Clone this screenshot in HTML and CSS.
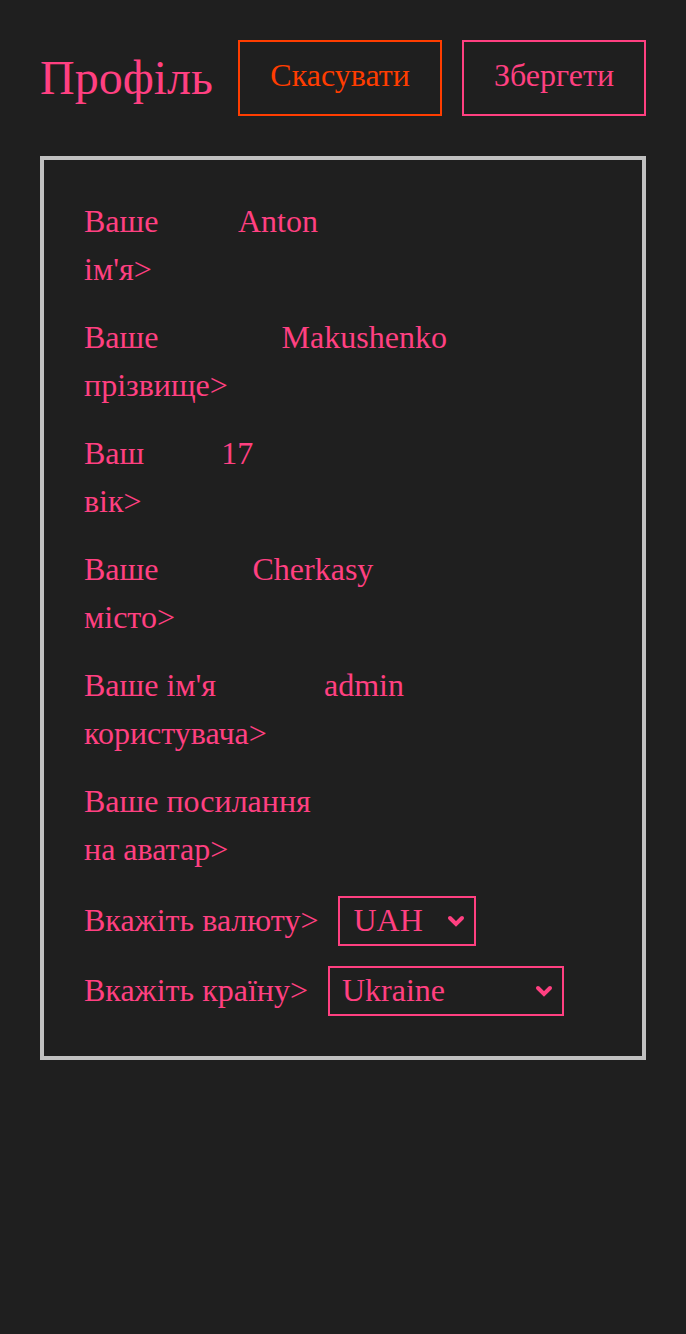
FILE: index.html
```html
<!DOCTYPE html>
<html lang="uk">
<head>
<meta charset="utf-8">
<title>Профіль</title>
<link rel="stylesheet" href="styles.css">
</head>
<body>
<header class="header">
  <h1 class="title">Профіль</h1>
  <div class="actions">
    <button class="btn btn-cancel">Скасувати</button>
    <button class="btn btn-save">Збергети</button>
  </div>
</header>
<form class="card">
  <div class="fields">
    <div class="row">
      <label class="label" for="name">Ваше ім'я&gt;</label>
      <input class="field" id="name" type="text" value="Anton">
    </div>
    <div class="row">
      <label class="label" for="surname">Ваше прізвище&gt;</label>
      <input class="field" id="surname" type="text" value="Makushenko">
    </div>
    <div class="row">
      <label class="label" for="age">Ваш вік&gt;</label>
      <input class="field" id="age" type="text" value="17">
    </div>
    <div class="row">
      <label class="label" for="city">Ваше місто&gt;</label>
      <input class="field" id="city" type="text" value="Cherkasy">
    </div>
    <div class="row">
      <label class="label" for="login">Ваше ім'я користувача&gt;</label>
      <input class="field" id="login" type="text" value="admin">
    </div>
    <div class="row">
      <label class="label" for="avatar">Ваше посилання на аватар&gt;</label>
      <input class="field" id="avatar" type="text" value="">
    </div>
  </div>
  <div class="choices">
    <div class="row">
      <label class="label-select" for="currency">Вкажіть валюту&gt;</label>
      <span class="select-wrap select-currency">
        <select class="select" id="currency">
          <option>UAH</option>
          <option>USD</option>
          <option>EUR</option>
        </select>
        <svg class="chevron" viewBox="0 0 18 12" width="18" height="12" aria-hidden="true"><path d="M3 3 L9 9 L15 3" fill="none" stroke="#ff4081" stroke-width="4" stroke-linecap="round" stroke-linejoin="miter"/></svg>
      </span>
    </div>
    <div class="row">
      <label class="label-select" for="country">Вкажіть країну&gt;</label>
      <span class="select-wrap select-country">
        <select class="select" id="country">
          <option>Ukraine</option>
          <option>Poland</option>
          <option>Germany</option>
        </select>
        <svg class="chevron" viewBox="0 0 18 12" width="18" height="12" aria-hidden="true"><path d="M3 3 L9 9 L15 3" fill="none" stroke="#ff4081" stroke-width="4" stroke-linecap="round" stroke-linejoin="miter"/></svg>
      </span>
    </div>
  </div>
</form>
</body>
</html>
```
FILE: styles.css
```css
html, body {
  margin: 0;
  background: #1f1f1f;
}

body {
  padding: 40px;
  font-family: "Liberation Serif", "Times New Roman", serif;
  color: #ff4081;
}

.header {
  display: flex;
  align-items: center;
  justify-content: space-between;
}

.title {
  margin: 0 0 2px;
  font-size: 48px;
  font-weight: normal;
  color: #ff4081;
}

.actions {
  display: flex;
  gap: 20px;
}

.btn {
  height: 76px;
  padding: 0 30px 6px;
  background: transparent;
  border: 2px solid currentColor;
  font-family: inherit;
  font-size: 32px;
  box-sizing: border-box;
}

.btn-cancel {
  color: #ff3d00;
}

.btn-save {
  color: #ff4081;
}

.card {
  margin-top: 40px;
  border: 4px solid #c0c0c0;
  padding: 37px 40px 40px;
  display: flex;
  flex-direction: column;
  gap: 23px;
}

.fields,
.choices {
  display: flex;
  flex-direction: column;
  gap: 20px;
}

.row {
  display: flex;
  align-items: flex-start;
  gap: 20px;
  font-size: 32px;
  line-height: 48px;
}

.label {
  flex: 0 1 auto;
}

.field {
  flex: 0 1 auto;
  width: 408px;
  min-width: 0;
  padding: 0;
  border: none;
  background: transparent;
  color: #ff4081;
  font-family: inherit;
  font-size: 32px;
  line-height: 48px;
  height: 48px;
  outline: none;
}

.label-select {
  flex: none;
}

.select-wrap {
  position: relative;
  display: block;
  flex: none;
}

.select-currency {
  width: 138px;
}

.select-country {
  width: 236px;
}

.select {
  display: block;
  width: 100%;
  height: 50px;
  box-sizing: border-box;
  margin: 0;
  -webkit-appearance: none;
  appearance: none;
  border: 2px solid #ff4081;
  border-radius: 0;
  background: transparent;
  color: #ff4081;
  font-family: inherit;
  font-size: 32px;
  padding: 0 36px 3px 13px;
}

.select-country .select {
  padding-left: 12px;
}

.chevron {
  position: absolute;
  right: 11px;
  top: 19px;
  pointer-events: none;
}
```
